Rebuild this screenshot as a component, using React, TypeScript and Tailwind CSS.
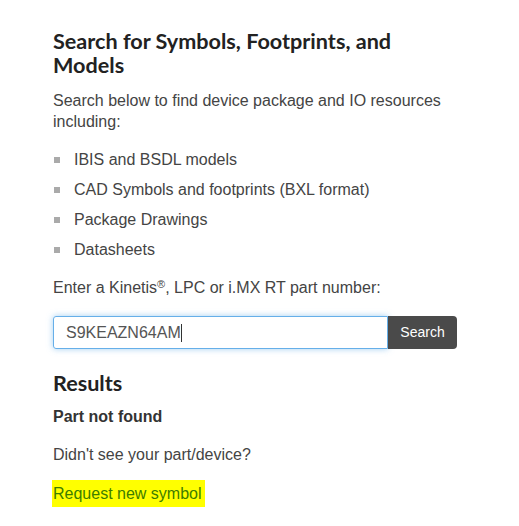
import React from 'react';

const items = [
  'IBIS and BSDL models',
  'CAD Symbols and footprints (BXL format)',
  'Package Drawings',
  'Datasheets',
];

export default function App() {
  return (
    <div className="w-[519px] h-[526px] bg-white pl-[53px] pt-[29px] text-[#444] font-['Liberation_Sans',Arial,sans-serif]">
      <h2 className="font-['Lato',sans-serif] font-bold text-[21.6px] leading-[24px] text-[#222] w-[400px]">
        Search for Symbols, Footprints, and Models
      </h2>
      <p className="mt-[13px] text-[16px] leading-[21px] w-[400px]">
        Search below to find device package and IO resources including:
      </p>
      <ul className="mt-[13px] flex flex-col">
        {items.map((t) => (
          <li key={t} className="flex items-center h-[30px] text-[16px]">
            <span className="w-[6px] h-[6px] bg-[#aaa] mr-[14px] ml-[1px]" />
            {t}
          </li>
        ))}
      </ul>
      <p className="mt-[12px] text-[16px] leading-[22px]">
        Enter a Kinetis<sup className="text-[11px]">®</sup>, LPC or i.MX RT part number:
      </p>
      <div className="mt-[17px] flex w-[404px] h-[33px]">
        <div className="flex-1 flex items-center border border-[#66afe9] rounded-l-[3px] shadow-[0_0_6px_rgba(102,175,233,0.6)] pl-[12px] text-[16px] text-[#555]">
          S9KEAZN64AM<span className="w-px h-[18px] bg-[#333]" />
        </div>
        <button className="w-[69px] bg-[#4a4a4a] text-white text-[14px] rounded-r-[4px]">Search</button>
      </div>
      <h3 className="mt-[22px] font-['Lato',sans-serif] font-bold text-[21.6px] leading-[25px] text-[#222]">Results</h3>
      <p className="mt-[10px] text-[16px] font-bold leading-[22px] text-[#333]">Part not found</p>
      <p className="mt-[16px] text-[16px] leading-[22px]">Didn't see your part/device?</p>
      <p className="mt-[17px] text-[16px] leading-[22px]">
        <span className="bg-[#ffff00] text-[#3d7d00] py-[5px] pr-[3px] -ml-[1px] pl-[1px]">Request new symbol</span>
      </p>
    </div>
  );
}
